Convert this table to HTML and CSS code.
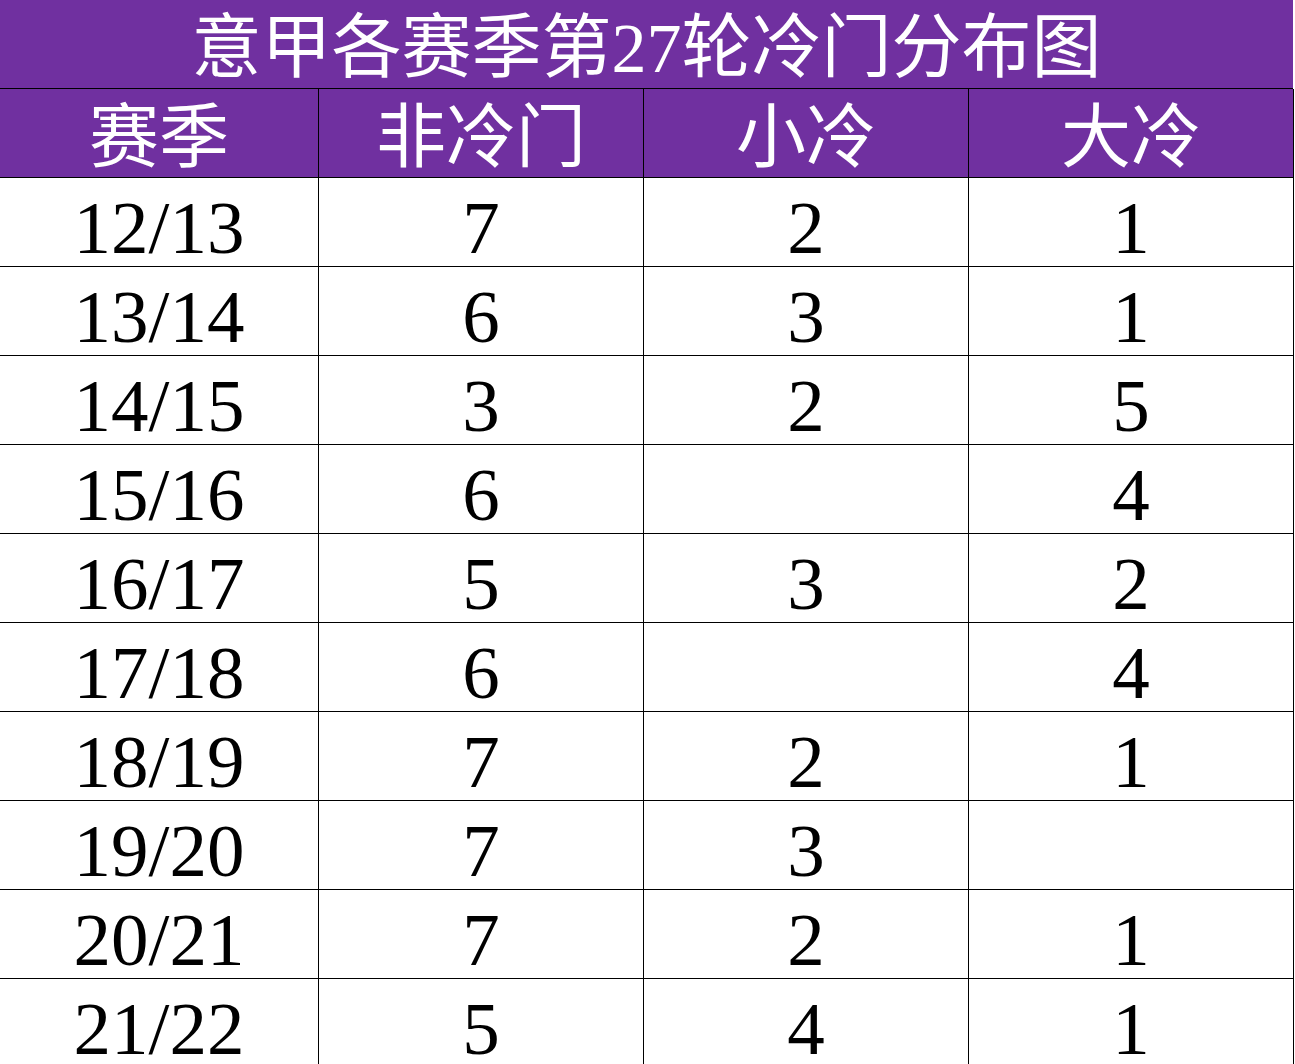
FILE: index.html
```html
<!DOCTYPE html>
<html lang="zh">
<head>
<meta charset="utf-8">
<title>意甲各赛季第27轮冷门分布图</title>
<link rel="stylesheet" href="styles.css">
</head>
<body>
<div class="sheet">
  <div class="title">意甲各赛季第27轮冷门分布图</div>
  <div class="grid">
    <div class="cell head">赛季</div>
    <div class="cell head">非冷门</div>
    <div class="cell head">小冷</div>
    <div class="cell head">大冷</div>

    <div class="cell">12/13</div><div class="cell">7</div><div class="cell">2</div><div class="cell">1</div>
    <div class="cell">13/14</div><div class="cell">6</div><div class="cell">3</div><div class="cell">1</div>
    <div class="cell">14/15</div><div class="cell">3</div><div class="cell">2</div><div class="cell">5</div>
    <div class="cell">15/16</div><div class="cell">6</div><div class="cell"></div><div class="cell">4</div>
    <div class="cell">16/17</div><div class="cell">5</div><div class="cell">3</div><div class="cell">2</div>
    <div class="cell">17/18</div><div class="cell">6</div><div class="cell"></div><div class="cell">4</div>
    <div class="cell">18/19</div><div class="cell">7</div><div class="cell">2</div><div class="cell">1</div>
    <div class="cell">19/20</div><div class="cell">7</div><div class="cell">3</div><div class="cell"></div>
    <div class="cell">20/21</div><div class="cell">7</div><div class="cell">2</div><div class="cell">1</div>
    <div class="cell">21/22</div><div class="cell">5</div><div class="cell">4</div><div class="cell">1</div>
  </div>
</div>
</body>
</html>
```

FILE: styles.css
```css
html, body {
  margin: 0;
  padding: 0;
  background: #ffffff;
  overflow: hidden;
}

body {
  font-family: "Liberation Serif", "Noto Sans CJK SC", serif;
  color: #000000;
}

.sheet {
  width: 1294px;
}

.title {
  box-sizing: border-box;
  width: 1293px;
  height: 89px;
  padding-top: 10px;
  border-bottom: 1px solid #000;
  background: #7030a0;
  color: #ffffff;
  font-size: 70px;
  line-height: 78px;
  text-align: center;
  white-space: nowrap;
}

.grid {
  display: grid;
  grid-template-columns: 319px 325px 325px 325px;
  grid-auto-rows: 89px;
}

.cell {
  box-sizing: border-box;
  height: 89px;
  padding-top: 6px;
  border-right: 1px solid #000;
  border-bottom: 1px solid #000;
  font-size: 75px;
  line-height: 82px;
  text-align: center;
  white-space: nowrap;
}

.cell:not(.head) {
  padding-top: 9px;
  line-height: 82px;
}

.head {
  padding-top: 11px;
  background: #7030a0;
  color: #ffffff;
  font-size: 70px;
  line-height: 77px;
}
```
